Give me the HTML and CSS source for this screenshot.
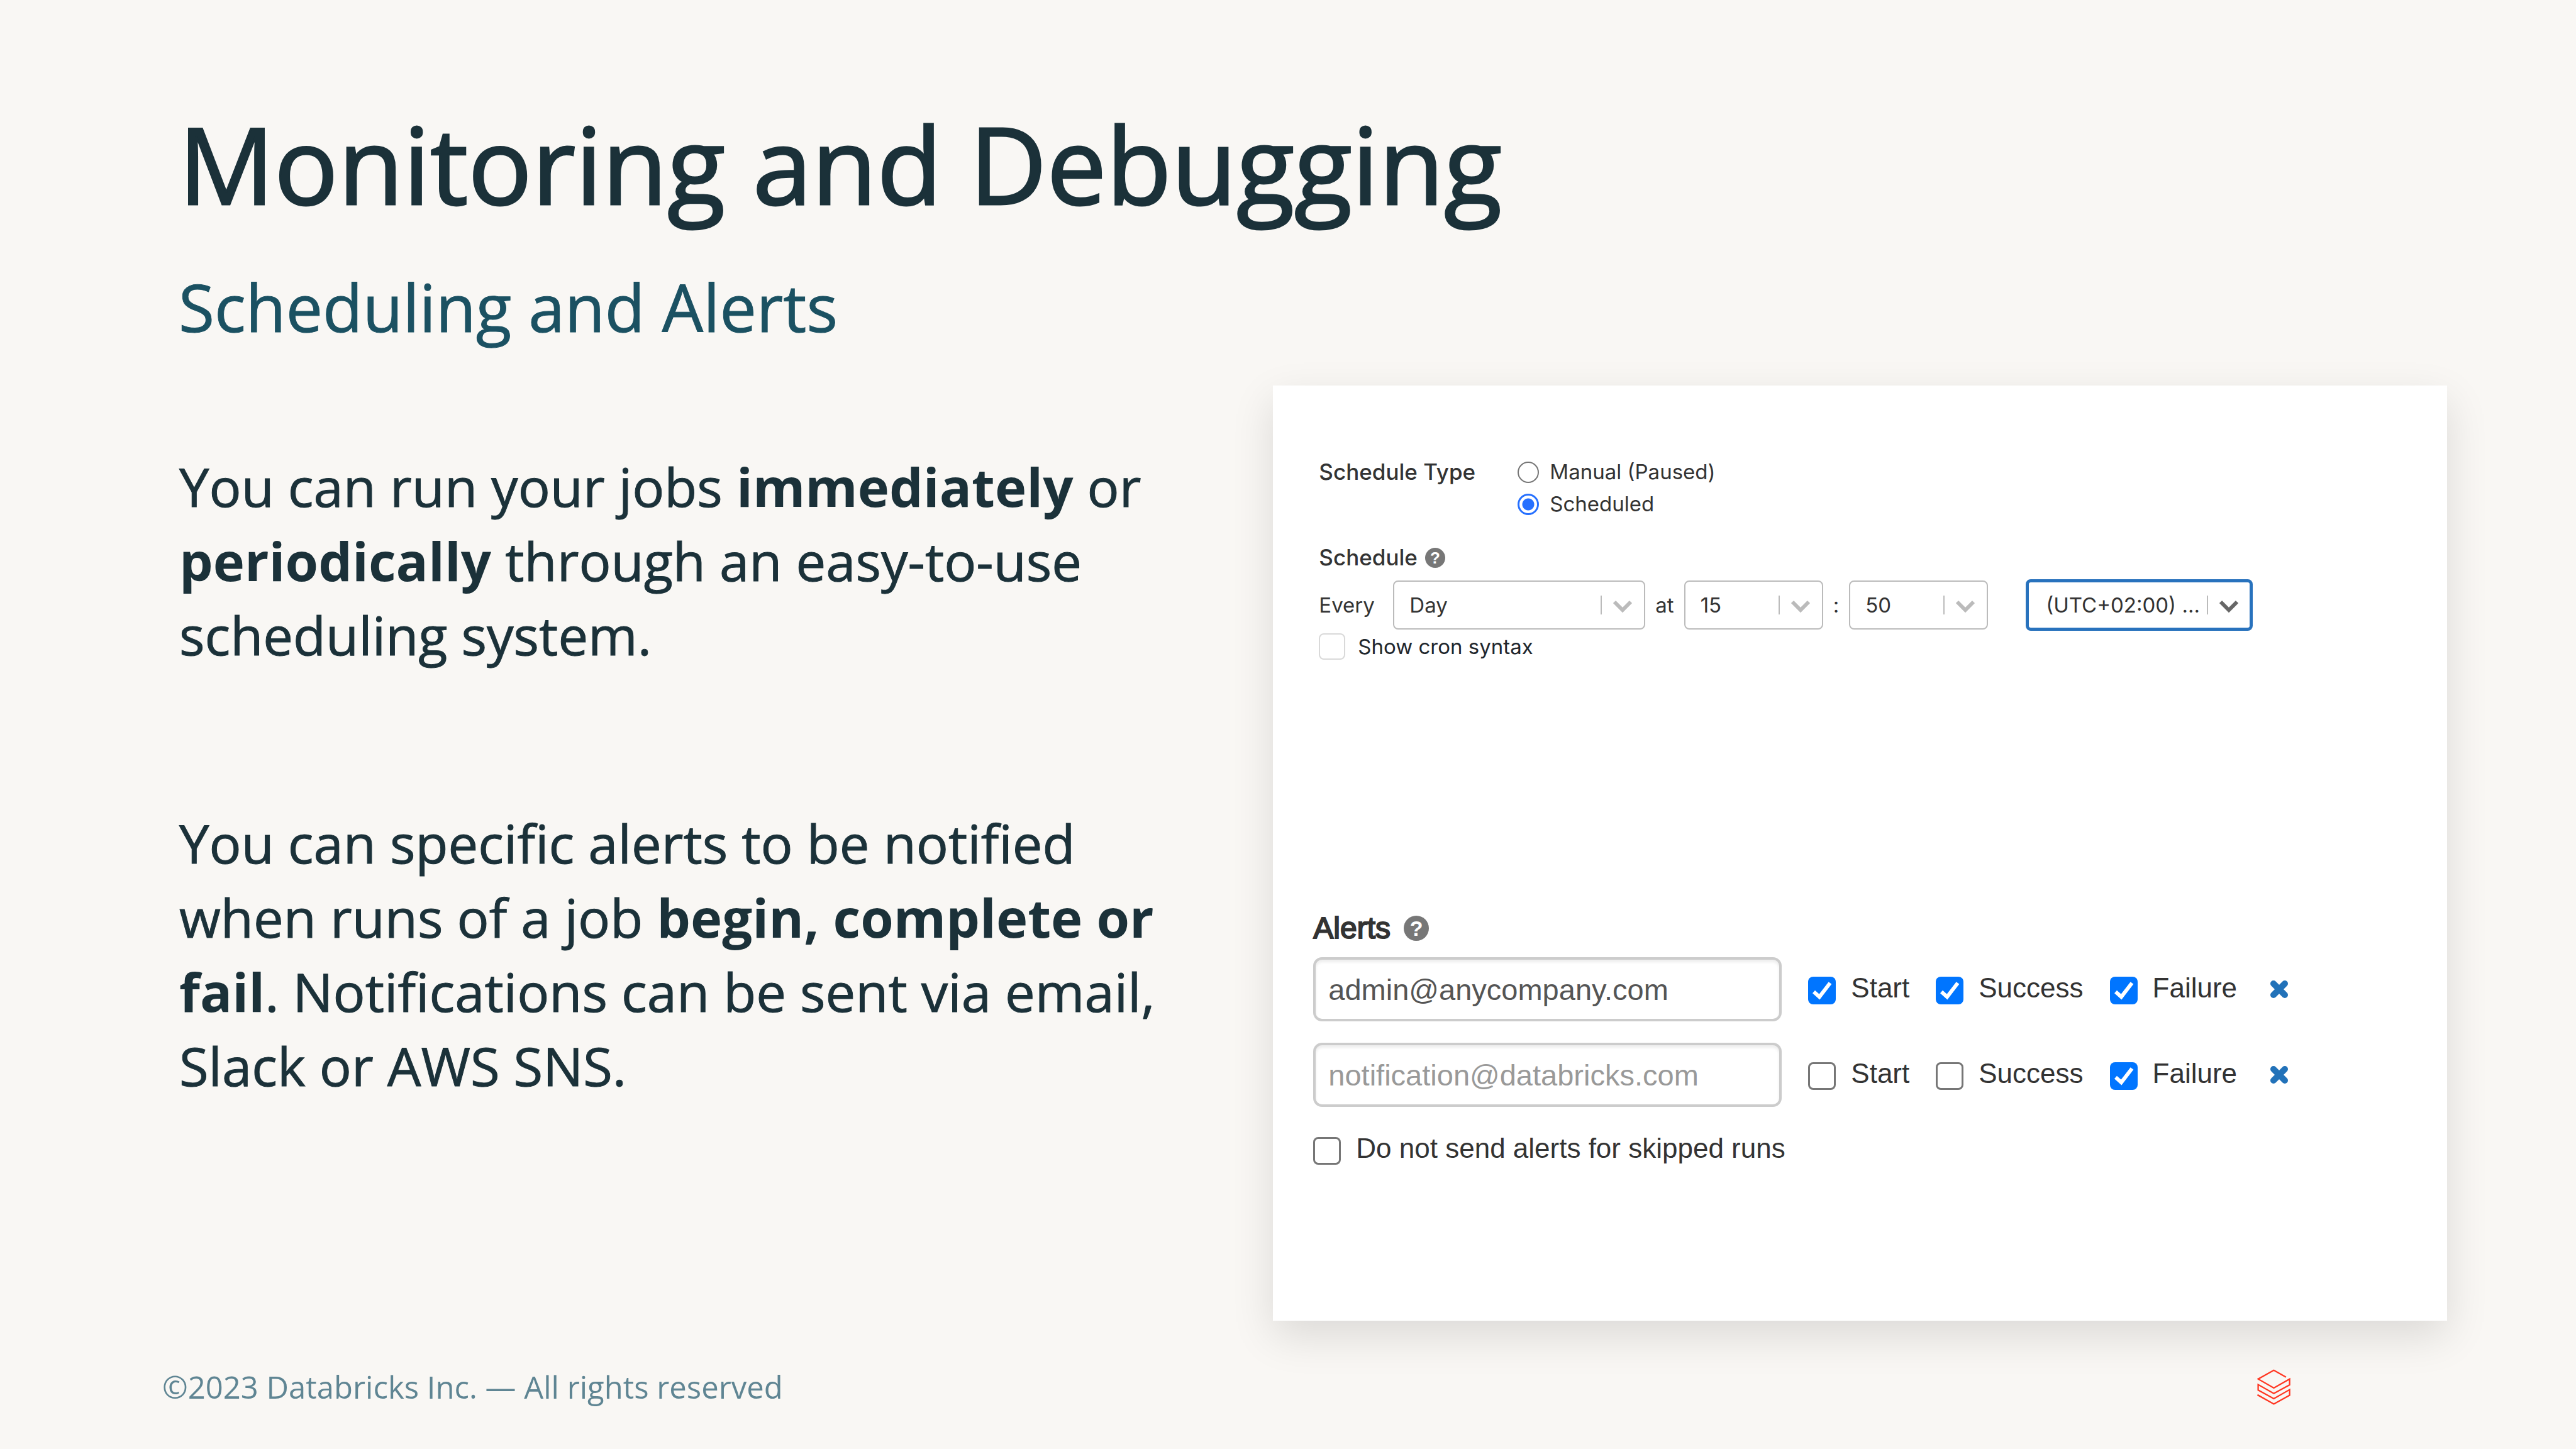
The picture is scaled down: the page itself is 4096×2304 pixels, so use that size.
FILE: index.html
```html
<!DOCTYPE html>
<html lang="en">
<head>
<meta charset="utf-8">
<title>Monitoring and Debugging</title>
<link rel="stylesheet" href="styles.css">
</head>
<body>
<div class="slide">
  <header class="heading">
    <h1 class="title">Monitoring and Debugging</h1>
    <h2 class="subtitle">Scheduling and Alerts</h2>
  </header>

  <main class="columns">
    <section class="copy">
      <p>You can run your jobs <strong>immediately</strong> or<br><strong>periodically</strong> through an easy-to-use<br>scheduling system.</p>
      <p>You can specific alerts to be notified<br>when runs of a job <strong>begin, complete or<br>fail</strong>. Notifications can be sent via email,<br>Slack or AWS SNS.</p>
    </section>

    <form class="card">
      <section class="schedule">
        <div class="type-row" role="radiogroup" aria-labelledby="type-label">
          <span class="label" id="type-label">Schedule Type</span>
          <div class="radios">
            <label class="choice"><input class="radio" type="radio" name="type">Manual (Paused)</label>
            <label class="choice"><input class="radio" type="radio" name="type" checked>Scheduled</label>
          </div>
        </div>
        <div class="schedule-head"><span class="label">Schedule</span><span class="help">?</span></div>
        <div class="timing">
          <label class="every" for="period">Every</label>
          <div class="picker picker-wide">
            <select class="select" id="period"><option>Day</option></select>
            <svg class="arrow" viewBox="0 0 72 76" aria-hidden="true"><path class="rule" d="M2 23V53"/><path class="chevron" d="M23 33L36 46L49 33"/></svg>
          </div>
          <label for="hour">at</label>
          <div class="picker">
            <select class="select" id="hour"><option>15</option></select>
            <svg class="arrow" viewBox="0 0 72 76" aria-hidden="true"><path class="rule" d="M2 23V53"/><path class="chevron" d="M23 33L36 46L49 33"/></svg>
          </div>
          <label for="minute">:</label>
          <div class="picker">
            <select class="select" id="minute"><option>50</option></select>
            <svg class="arrow" viewBox="0 0 72 76" aria-hidden="true"><path class="rule" d="M2 23V53"/><path class="chevron" d="M23 33L36 46L49 33"/></svg>
          </div>
          <div class="picker picker-zone">
            <select class="select" aria-label="Time zone"><option>(UTC+02:00) ...</option></select>
            <svg class="arrow" viewBox="0 0 72 76" aria-hidden="true"><path class="rule" d="M2 23V53"/><path class="chevron" d="M23 33L36 46L49 33"/></svg>
          </div>
        </div>
        <label class="cron"><input class="check check-light" type="checkbox">Show cron syntax</label>
      </section>

      <section class="alerts">
        <div class="alerts-head"><span class="alerts-label">Alerts</span><span class="help help-large">?</span></div>
        <div class="alert-list">
          <div class="alert-row">
            <input class="email" type="text" aria-label="Alert address 1" value="admin@anycompany.com">
            <label class="tick"><input class="check" type="checkbox" checked>Start</label>
            <label class="tick"><input class="check" type="checkbox" checked>Success</label>
            <label class="tick"><input class="check" type="checkbox" checked>Failure</label>
            <button class="remove" type="button" aria-label="Remove alert"><svg viewBox="0 0 30 30"><path d="M6 6L24 24M24 6L6 24"/></svg></button>
          </div>
          <div class="alert-row">
            <input class="email" type="text" aria-label="Alert address 2" placeholder="notification@databricks.com">
            <label class="tick"><input class="check" type="checkbox">Start</label>
            <label class="tick"><input class="check" type="checkbox">Success</label>
            <label class="tick"><input class="check" type="checkbox" checked>Failure</label>
            <button class="remove" type="button" aria-label="Remove alert"><svg viewBox="0 0 30 30"><path d="M6 6L24 24M24 6L6 24"/></svg></button>
          </div>
        </div>
        <label class="tick skipped"><input class="check" type="checkbox">Do not send alerts for skipped runs</label>
      </section>
    </form>
  </main>

  <footer class="footer">
    <span>©2023 Databricks Inc. — All rights reserved</span>
    <svg class="logo" viewBox="172 120 232 248" aria-label="Databricks"><path d="M373 175L288 127L179 188L288 250L398 188V229L288 289L179 227V265L288 325L398 262V301L288 362L174 298"/></svg>
  </footer>
</div>
</body>
</html>
```
FILE: styles.css
```css
* { box-sizing: border-box; }

body {
  margin: 0;
  background: #f9f7f4;
  color: #1b3139;
  font-family: "Open Sans", "Noto Sans", sans-serif;
}

.slide {
  display: flex;
  flex-direction: column;
  min-height: 100vh;
  padding-top: 160px;
}

.heading { padding: 0 284px; }

.title {
  margin: 0;
  font-size: 169px;
  line-height: 200px;
  font-weight: 400;
  -webkit-text-stroke: 3px currentColor;
}

.subtitle {
  margin: 68px 0 0;
  color: #1b5162;
  font-size: 104px;
  line-height: 120px;
  font-weight: 400;
  -webkit-text-stroke: 1px currentColor;
}

.columns {
  display: grid;
  grid-template-columns: 7fr 8fr;
  column-gap: 106px;
  margin-top: 65px;
  padding: 0 205px 0 285px;
}

/* Left column text */
.copy {
  display: flex;
  flex-direction: column;
  gap: 213px;
  padding-top: 101px;
  font-size: 85px;
  line-height: 118px;
  white-space: nowrap;
  -webkit-text-stroke: 1px currentColor;
}
.copy p { margin: 0; }
.copy strong { font-weight: 700; -webkit-text-stroke: 0; }

/* Job settings card */
.card {
  padding: 112px 64px 248px;
  background: #fff;
  box-shadow: 0 24px 64px rgba(0, 0, 0, 0.12);
  color: #333;
}

.schedule {
  padding-left: 9px;
  font-family: Inter, "Liberation Sans", sans-serif;
  font-size: 33px;
  line-height: 51px;
}
.label { font-size: 35px; font-weight: 500; }

.type-row {
  display: grid;
  grid-template-columns: 316px 1fr;
}
.radios { display: flex; flex-direction: column; }
.choice { display: flex; align-items: center; gap: 17px; }

.radio {
  appearance: none;
  width: 34px;
  height: 34px;
  margin: 0;
  border: 2px solid #767676;
  border-radius: 50%;
  background: #fff;
}
.radio:checked {
  border: 3px solid #2670ff;
  background: radial-gradient(circle, #2670ff 9px, #fff 10px);
}

.schedule-head {
  display: flex;
  align-items: center;
  gap: 12px;
  margin-top: 34px;
}

.help {
  display: grid;
  place-items: center;
  width: 32px;
  height: 32px;
  border-radius: 50%;
  background: #777;
  color: #fff;
  font: 700 26px/32px "Liberation Sans", sans-serif;
}
.help-large {
  width: 40px;
  height: 40px;
  font-size: 34px;
  line-height: 40px;
}

.timing {
  display: flex;
  align-items: center;
  gap: 16px;
  margin-top: 9px;
}
.every { width: 102px; }

.picker {
  position: relative;
  width: 221px;
  height: 78px;
}
.picker-wide { width: 401px; }
.picker-zone { width: 361px; height: 82px; margin-left: 44px; }

.select {
  appearance: none;
  width: 100%;
  height: 100%;
  padding: 0 24px;
  border: 2px solid #bbb;
  border-radius: 8px;
  background: #fff;
  color: #333;
  font: inherit;
}
.picker-zone .select {
  padding: 0 0 0 27px;
  border: 5px solid #2872bd;
}

.arrow {
  position: absolute;
  top: 0;
  right: 0;
  width: 72px;
  height: 100%;
  fill: none;
  stroke: #bbb;
  pointer-events: none;
}
.picker-zone .arrow { right: 2px; }
.rule { stroke-width: 2; }
.chevron { stroke-width: 6; }
.picker-zone .chevron { stroke: #666; }

.cron {
  display: flex;
  align-items: center;
  gap: 20px;
  margin-top: 4px;
  color: #1f272d;
  line-height: 42px;
}

.check {
  appearance: none;
  flex: none;
  width: 44px;
  height: 44px;
  margin: 0;
  border: 3px solid #767676;
  border-radius: 8px;
  background: #fff;
}
.check:checked {
  border: 0;
  background: #0075ff url("data:image/svg+xml,%3Csvg xmlns='http://www.w3.org/2000/svg' viewBox='0 0 44 44'%3E%3Cpath d='M9 24L18 32L35 10' fill='none' stroke='white' stroke-width='6'/%3E%3C/svg%3E") center / 44px 44px;
}
.check-light {
  width: 42px;
  height: 42px;
  border: 2px solid #d9d9d9;
}

/* Alerts */
.alerts {
  margin-top: 399px;
  font-family: "Liberation Sans", Arial, sans-serif;
  font-size: 44px;
  line-height: 36px;
}
.alerts-head {
  display: flex;
  align-items: center;
  gap: 21px;
  height: 56px;
}
.alerts-label {
  font-size: 48px;
  -webkit-text-stroke: 2px currentColor;
}

.alert-list {
  display: flex;
  flex-direction: column;
  gap: 34px;
  margin-top: 18px;
}
.alert-row { display: flex; align-items: center; gap: 42px; }

.email {
  width: 745px;
  height: 102px;
  padding: 0 20px;
  border: 4px solid #ccc;
  border-radius: 14px;
  background: #fff;
  box-shadow: inset 0 4px 4px rgba(0, 0, 0, 0.07);
  color: #555;
  font: inherit;
  font-size: 47px;
}
.email::placeholder { color: #999; }

.tick { display: flex; align-items: flex-start; gap: 24px; padding-top: 4px; }
.skipped { margin-top: 44px; }

.remove {
  width: 30px;
  height: 30px;
  margin-left: 10px;
  padding: 0;
  border: 0;
  background: none;
}
.remove svg {
  display: block;
  width: 100%;
  height: 100%;
  fill: none;
  stroke: #2272b9;
  stroke-width: 10;
  stroke-linecap: round;
}

/* Footer */
.footer {
  display: flex;
  align-items: center;
  justify-content: space-between;
  margin-top: 73px;
  padding: 0 454px 0 258px;
  color: #5f8593;
  font-size: 49px;
  line-height: 64px;
}
.logo {
  width: 53px;
  height: 57px;
  fill: none;
  stroke: #ff3621;
  stroke-width: 10;
}
```
